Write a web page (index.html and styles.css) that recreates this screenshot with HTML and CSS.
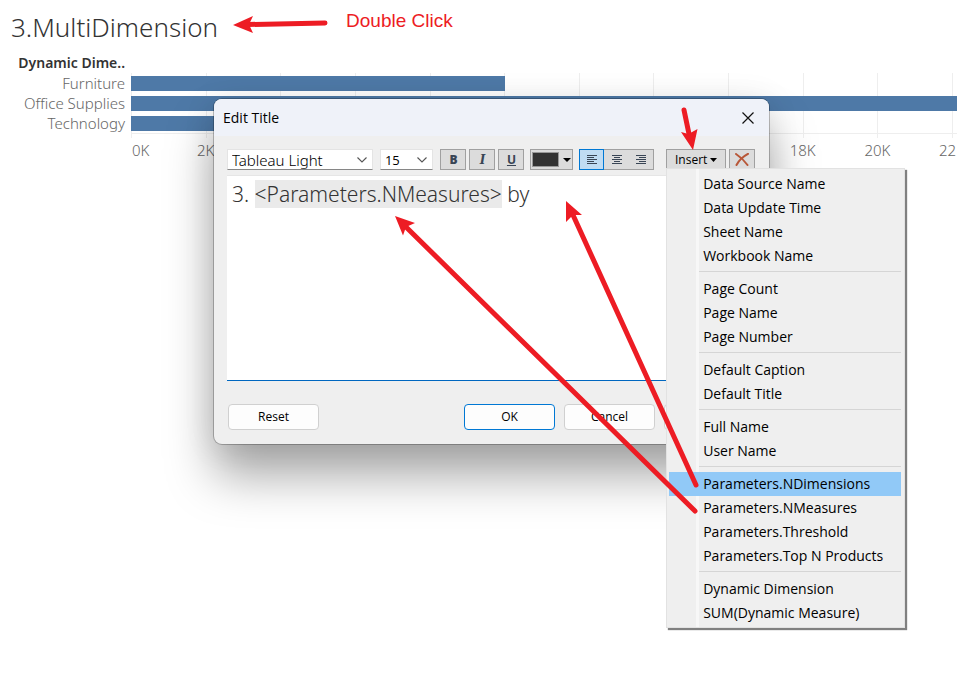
FILE: index.html
```html
<!DOCTYPE html>
<html lang="en">
<head>
<meta charset="utf-8">
<title>3.MultiDimension</title>
<link rel="stylesheet" href="styles.css">
</head>
<body>
<main class="sheet">
  <header class="sheet-head">
    <h1>3.MultiDimension</h1>
    <p class="note">Double Click</p>
  </header>

  <section class="chart">
    <div class="row-labels">
      <h2>Dynamic Dime..</h2>
      <span>Furniture</span>
      <span>Office Supplies</span>
      <span>Technology</span>
    </div>
    <div class="plot">
      <div class="grid-lines"><i></i><i></i><i></i><i></i><i></i><i></i><i></i><i></i><i></i><i></i><i></i><i></i></div>
      <div class="bars">
        <div class="bar" style="width:45.3%"></div>
        <div class="bar" style="width:100%"></div>
        <div class="bar" style="width:68%"></div>
      </div>
      <div class="axis"><span>0K</span><span>2K</span><span>4K</span><span>6K</span><span>8K</span><span>10K</span><span>12K</span><span>14K</span><span>16K</span><span>18K</span><span>20K</span><span>22K</span></div>
    </div>
  </section>

  <div class="dialog" role="dialog" aria-labelledby="dialog-title">
    <div class="title-bar">
      <h2 id="dialog-title">Edit Title</h2>
      <button class="close" aria-label="Close"><svg width="12" height="12" viewBox="0 0 12 12"><path d="M0.5 0.5 11.5 11.5M11.5 0.5 0.5 11.5" stroke="#111" stroke-width="1.2"/></svg></button>
    </div>
    <div class="dialog-body">
      <div class="toolbar">
        <label class="pick pick-font"><select class="light" aria-label="Font"><option>Tableau Light</option></select><svg width="10" height="6" viewBox="0 0 10 6"><path d="M.5.5 5 5 9.5.5" fill="none" stroke="#555" stroke-width="1.1"/></svg></label>
        <label class="pick pick-size"><select aria-label="Font size"><option>15</option></select><svg width="10" height="6" viewBox="0 0 10 6"><path d="M.5.5 5 5 9.5.5" fill="none" stroke="#555" stroke-width="1.1"/></svg></label>
        <div class="group">
          <button class="tool glyph" aria-label="Bold"><b>B</b></button>
          <button class="tool glyph" aria-label="Italic"><i>I</i></button>
          <button class="tool glyph" aria-label="Underline"><u>U</u></button>
        </div>
        <button class="tool color" aria-label="Text color"><span class="swatch"></span><svg width="8" height="4" viewBox="0 0 8 4"><path d="M0 0H8L4 4Z"/></svg></button>
        <div class="aligns">
          <button class="tool on" aria-label="Align left"><svg width="10" height="9" viewBox="0 0 10 9"><path d="M0 .5H10M0 2.5H7M0 4.5H10M0 6.5H7M0 8.5H10"/></svg></button>
          <button class="tool" aria-label="Align center"><svg width="10" height="9" viewBox="0 0 10 9"><path d="M0 .5H10M2 2.5H8M0 4.5H10M2 6.5H8M0 8.5H10"/></svg></button>
          <button class="tool" aria-label="Align right"><svg width="10" height="9" viewBox="0 0 10 9"><path d="M0 .5H10M3 2.5H10M0 4.5H10M3 6.5H10M0 8.5H10"/></svg></button>
        </div>
        <div class="insert">
          <button class="tool insert-button" aria-haspopup="menu">Insert<svg width="7" height="4" viewBox="0 0 7 4"><path d="M0 0H7L3.5 4Z"/></svg></button>
          <div class="menu" role="menu">
            <div class="menu-group">
              <button role="menuitem">Data Source Name</button>
              <button role="menuitem">Data Update Time</button>
              <button role="menuitem">Sheet Name</button>
              <button role="menuitem">Workbook Name</button>
            </div>
            <div class="menu-group">
              <button role="menuitem">Page Count</button>
              <button role="menuitem">Page Name</button>
              <button role="menuitem">Page Number</button>
            </div>
            <div class="menu-group">
              <button role="menuitem">Default Caption</button>
              <button role="menuitem">Default Title</button>
            </div>
            <div class="menu-group">
              <button role="menuitem">Full Name</button>
              <button role="menuitem">User Name</button>
            </div>
            <div class="menu-group">
              <button role="menuitem" class="current">Parameters.NDimensions</button>
              <button role="menuitem">Parameters.NMeasures</button>
              <button role="menuitem">Parameters.Threshold</button>
              <button role="menuitem">Parameters.Top N Products</button>
            </div>
            <div class="menu-group">
              <button role="menuitem">Dynamic Dimension</button>
              <button role="menuitem">SUM(Dynamic Measure)</button>
            </div>
          </div>
        </div>
        <button class="tool clear" aria-label="Clear"><svg width="14" height="13" viewBox="0 0 14 13"><path d="M1 1C4 3 9 7 12.500 12M13 .8C9 3 4 7 1.500 12" fill="none" stroke="#b85738" stroke-width="2" stroke-linecap="round"/></svg></button>
      </div>
      <div class="editor" role="textbox" aria-label="Title text" contenteditable="true" spellcheck="false">3. <mark>&lt;Parameters.NMeasures&gt;</mark> by</div>
      <div class="actions">
        <button>Reset</button>
        <button class="primary">OK</button>
        <button>Cancel</button>
        <button>Apply</button>
      </div>
    </div>
  </div>

  <svg class="arrows" width="957" height="677" viewBox="0 0 957 677" aria-hidden="true">
    <g stroke="#ed1c24" stroke-width="5" stroke-linecap="round">
      <path d="M325 23 248 24.500M684 110 689 134M696 485 573 215M695 511 406 227"/>
    </g>
    <g fill="#ed1c24">
      <path d="M233 25 253 16 249 24.500 253 33Z"/>
      <path d="M693 150 681 132 688.500 134 697.500 129Z"/>
      <path d="M566 201 582 215 573 215 566 222Z"/>
      <path d="M395 216 415 223 406 227 403 235.500Z"/>
    </g>
  </svg>
</main>
</body>
</html>
```

FILE: styles.css
```css
* { box-sizing: border-box; }

body {
  margin: 0;
  background: #fff;
  color: #000;
  font: 14px/20px "Open Sans", "Noto Sans", sans-serif;
}

h1, h2, p { margin: 0; }
button, select { font: inherit; color: inherit; }
svg { display: block; }

.sheet {
  position: relative;
  min-height: 100vh;
  overflow: hidden;
}

.sheet-head {
  display: flex;
  gap: 128px;
  padding: 8px 0 0 11px;
}

h1 {
  color: #333;
  font-family: "Noto Sans", sans-serif;
  font-size: 26px;
  font-weight: 300;
  line-height: 38px;
}

.note {
  color: #ed1c24;
  font: 19px/26px "Liberation Sans", sans-serif;
}

/* Bar chart */
.chart {
  display: grid;
  grid-template-columns: 125px 1fr;
  column-gap: 6px;
  padding-top: 7px;
  font-family: "Noto Sans", sans-serif;
  font-size: 15px;
}

.row-labels {
  display: flex;
  flex-direction: column;
  align-items: flex-end;
  color: #666;
  font-weight: 300;
}

.row-labels h2 {
  color: #333;
  font-size: 14px;
  font-weight: 600;
  line-height: 20px;
}

.plot {
  position: relative;
  overflow: hidden;
  margin-top: 20px;
}

.grid-lines, .axis {
  display: grid;
  grid-template-columns: repeat(11, 1fr) 5px;
}

.grid-lines {
  position: absolute;
  inset: 0 0 auto;
  height: 65px;
}

.grid-lines i { border-left: 1px solid #eee; }

.bars {
  position: relative;
  display: flex;
  flex-direction: column;
  gap: 5px;
  padding: 3px 0 2px;
  border-bottom: 1px solid #eee;
}

.bar {
  height: 15px;
  background: #4e79a7;
}

.axis {
  padding-top: 6px;
  color: #666;
  font-weight: 300;
}

.axis span {
  justify-self: start;
  width: 40px;
  margin-left: -20px;
  text-align: center;
}

.axis span:first-child {
  margin-left: 1px;
  text-align: left;
}

/* Dialog */
.dialog {
  position: absolute;
  top: 99px;
  left: 214px;
  width: 555px;
  border-radius: 8px;
  background: #efefef;
  box-shadow: 0 0 0 1px rgba(0, 0, 0, .24), 0 32px 48px rgba(0, 0, 0, .34), 0 2px 32px rgba(0, 0, 0, .1);
  font-size: 13px;
}

.title-bar {
  display: flex;
  align-items: center;
  justify-content: space-between;
  height: 37px;
  padding: 0 15px 0 9px;
  border-radius: 8px 8px 0 0;
  background: #eff2f9;
}

.title-bar h2 {
  font-size: 14px;
  font-weight: 400;
}

.close {
  padding: 0;
  border: 0;
  background: none;
}

.dialog-body { padding: 13px 14px 14px 13px; }

.toolbar {
  display: flex;
  height: 21px;
}

.pick {
  position: relative;
  margin-right: 7px;
}

.pick-font { width: 147px; }
.pick-size { width: 54px; }

.pick select {
  width: 100%;
  height: 21px;
  padding: 0 0 0 4px;
  border: 1px solid #e4e4e4;
  border-bottom-color: #868686;
  border-radius: 0;
  background: #fff;
  appearance: none;
}

.pick .light {
  font-family: "Noto Sans", sans-serif;
  font-size: 15px;
  font-weight: 300;
}

.pick svg {
  position: absolute;
  top: 8px;
  right: 6px;
}

.group {
  display: flex;
  gap: 3px;
  margin-right: 6px;
}

.tool {
  display: flex;
  align-items: center;
  justify-content: center;
  width: 26px;
  height: 21px;
  padding: 0;
  border: 1px solid #a0a0a0;
  background: #dcdcdc;
}

.glyph {
  color: #394555;
  font: 700 12px/14px "Noto Sans", sans-serif;
}

.glyph i { font-family: "DejaVu Serif", serif; }

.color {
  justify-content: flex-end;
  gap: 4px;
  width: 43px;
  padding-right: 1px;
  margin-right: 6px;
}

.swatch {
  width: 27px;
  height: 15px;
  border: 1px solid #999;
  background: #333;
}

.aligns {
  display: flex;
  margin-right: 12px;
}

.aligns .tool {
  width: 25px;
  border-width: 1px 0;
}

.aligns .tool:last-child { border-right-width: 1px; }

.aligns .on {
  border: 1px solid #0078d4;
  background: #c0dcf3;
}

.aligns path { stroke: #394555; }

.insert {
  position: relative;
  margin-right: 3px;
}

.insert-button {
  gap: 3px;
  width: 60px;
  font-size: 12px;
}

.editor {
  min-height: 206px;
  margin-top: 5px;
  padding: 4px 5px;
  border: solid #e6e6e6;
  border-width: 1px 1px 1px 0;
  border-bottom-color: #0067c0;
  background: #fff;
  color: #333;
  font-family: "Noto Sans", sans-serif;
  font-size: 21px;
  font-weight: 300;
  line-height: 28px;
}

.editor mark {
  background: #eaeaea;
  color: inherit;
}

.actions {
  display: flex;
  gap: 9px;
  margin-top: 23px;
  padding-left: 1px;
}

.actions button {
  width: 91px;
  height: 26px;
  padding: 0;
  border: 1px solid #d0d0d0;
  border-radius: 4px;
  background: #fdfdfd;
  font-size: 12px;
}

.actions .primary {
  margin-left: auto;
  border-color: #0078d4;
}

/* Insert menu */
.menu {
  position: absolute;
  z-index: 1;
  top: 19px;
  left: 0;
  width: 239px;
  padding: 3px 3px 2px 2px;
  border: 1px solid #e2e2e2;
  background: linear-gradient(#f7f7f7, #f7f7f7) 29px 0 / 3px 100% no-repeat #efefef;
  box-shadow: 2px 2px 1px #808080;
}

.menu-group + .menu-group {
  margin-top: 3px;
  padding-top: 6px;
  background: linear-gradient(#d5d5d5, #d5d5d5) 30px 0 / 100% 1px no-repeat;
}

.menu button {
  display: block;
  width: 100%;
  height: 24px;
  padding: 0 0 0 34px;
  border: 0;
  background: none;
  font-size: 14px;
  text-align: left;
}

.menu .current { background: #91c9f7; }

.arrows {
  position: absolute;
  z-index: 2;
  top: 0;
  left: 0;
  pointer-events: none;
}
```
